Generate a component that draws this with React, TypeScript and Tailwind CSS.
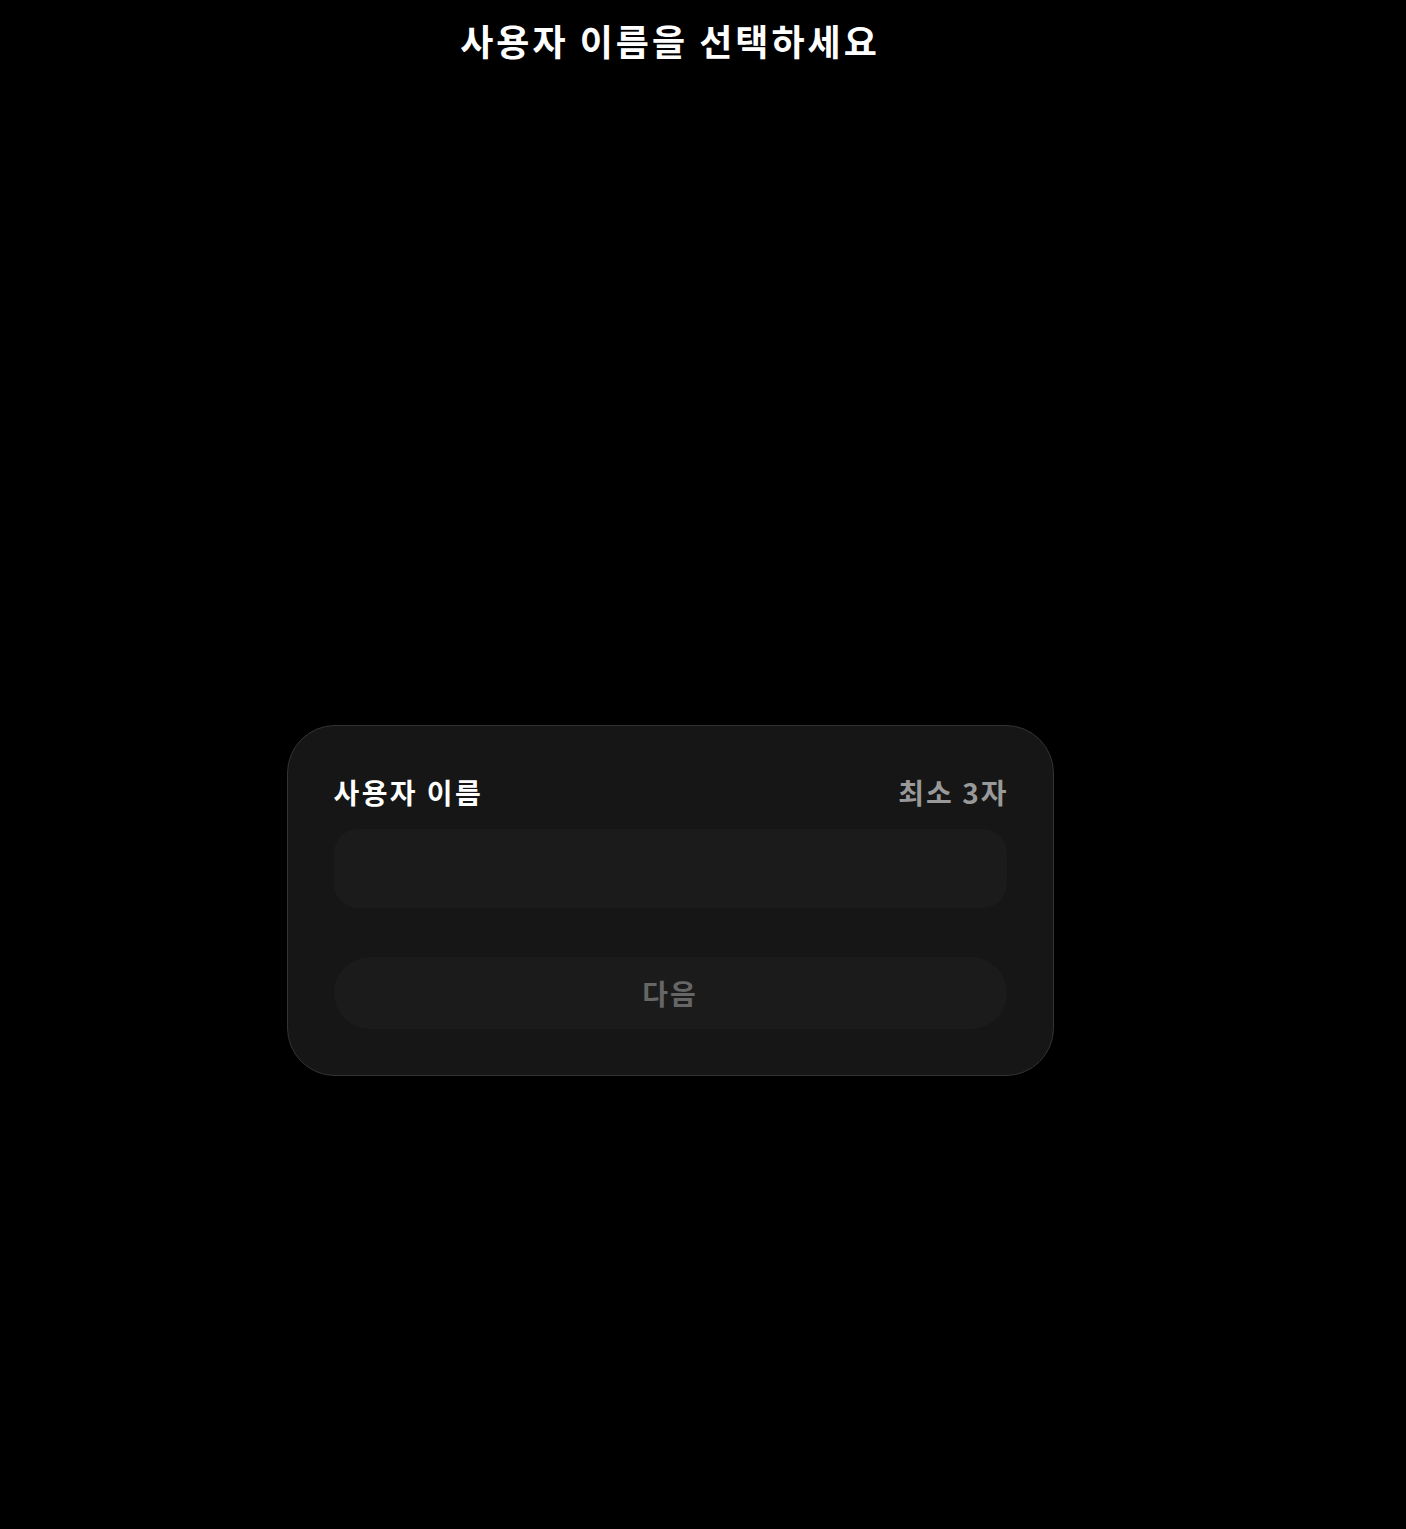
import { useState } from 'react';

const font = { fontFamily: '"Noto Sans CJK KR", "Noto Sans", sans-serif' };

/**
 * 사용자 이름 선택 페이지
 */
export default function App() {
  const [name, setName] = useState('');
  const valid = name.trim().length >= 3;

  return (
    <div className="min-h-[1529px] bg-black text-white" style={font}>
      <div className="w-[1340px] flex flex-col items-center">
        <h1 className="pt-[14px] text-[36px] font-bold leading-[52px] tracking-[3px]">사용자 이름을 선택하세요</h1>

        <div className="mt-[659px] w-[767px] rounded-[48px] border border-[#333333] bg-[#161616] px-[46px] pt-[44px] pb-[46px]">
          <div className="flex items-center justify-between">
            <span className="text-[28px] font-bold leading-[44px] tracking-[2.4px]">사용자 이름</span>
            <span className="-mr-[2px] text-[28px] font-bold leading-[44px] tracking-[2px] text-[#999999]">최소 3자</span>
          </div>
          <input
            value={name}
            onChange={(e) => setName(e.target.value)}
            className="mt-[15px] block h-[79px] w-full rounded-[24px] bg-[#1b1b1b] px-6 text-[26px] text-white outline-none"
          />
          <button
            disabled={!valid}
            className="mt-[49px] flex h-[72px] w-full items-center justify-center rounded-full bg-[#1b1b1b] text-[28px] font-bold tracking-[2px] text-[#666666]"
          >
            다음
          </button>
        </div>
      </div>
    </div>
  );
}
